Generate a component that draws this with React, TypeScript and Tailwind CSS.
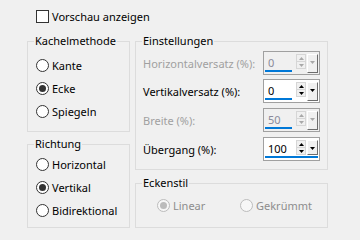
import React from "react";

const F = "font-['Noto_Sans',sans-serif]";

function Radio({ checked, disabled, label }: { checked?: boolean; disabled?: boolean; label: string }) {
  return (
    <div className="flex items-center h-[13px]">
      <span
        className={`w-[13px] h-[13px] rounded-full border flex items-center justify-center shrink-0 ${
          disabled ? "border-[#bcbcbc] bg-[#f7f7f7]" : "border-[#333333] bg-white"
        }`}
      >
        {checked && (
          <span className={`w-[7px] h-[7px] rounded-full ${disabled ? "bg-[#bcbcbc]" : "bg-[#333333]"}`} />
        )}
      </span>
      <span className={`ml-[3px] leading-[15px] whitespace-nowrap ${disabled ? "text-[#8d8d8d]" : "text-black"}`}>
        {label}
      </span>
    </div>
  );
}

function Group({ title, className, children }: { title: string; className: string; children: React.ReactNode }) {
  return (
    <div className={`relative border border-[#dcdcdc] ${className}`}>
      <span className="absolute left-[6px] top-[-9px] px-[1px] bg-[#f0f0f0] leading-[15px] whitespace-nowrap">
        {title}
      </span>
      {children}
    </div>
  );
}

function Tri({ up, color }: { up?: boolean; color: string }) {
  return (
    <svg width="5" height="3" viewBox="0 0 5 3">
      <path d={up ? "M2.5 0 L5 3 L0 3 Z" : "M0 0 L5 0 L2.5 3 Z"} fill={color} />
    </svg>
  );
}

function Arrows({ disabled }: { disabled?: boolean }) {
  const c = disabled ? "#a8a8a8" : "#000000";
  return (
    <div className="w-[10px] h-[15px] mt-[2px] flex flex-col border border-[#d6d6d6] bg-[#f0f0f0]">
      <div className="flex-1 flex items-center justify-center border-b border-[#d6d6d6]">
        <Tri up color={c} />
      </div>
      <div className="flex-1 flex items-center justify-center">
        <Tri color={c} />
      </div>
    </div>
  );
}

function DropBtn({ disabled, h }: { disabled?: boolean; h: string }) {
  const c = disabled ? "#a8a8a8" : "#000000";
  return (
    <div
      className={`w-[11px] ${h} mt-[2px] bg-[#f0f0f0] border-l border-t border-l-[#ffffff] border-t-[#ffffff] border-r border-b border-r-[#6d6d6d] border-b-[#6d6d6d] flex justify-center pt-[6px]`}
    >
      <Tri color={c} />
    </div>
  );
}

function Spinner({ value, disabled, focused }: { value: string; disabled?: boolean; focused?: boolean }) {
  const textCls = disabled ? "text-[#8a8a9a]" : "text-black";
  const bg = disabled ? "bg-[#f0f0f0]" : "bg-white";
  if (focused) {
    return (
      <div className={`w-[57px] h-[24px] border border-[#a0a0a0] ${bg} flex flex-col`}>
        <div className="flex flex-1">
          <div className={`ml-[1px] w-[27px] pl-[3px] pt-[3px] leading-[15px] ${textCls}`}>{value}</div>
          <div className="ml-[4px]">
            <Arrows disabled={disabled} />
          </div>
          <div className="ml-[1px]">
            <DropBtn disabled={disabled} h="h-[15px]" />
          </div>
        </div>
        <div className="mx-[1px] h-[3px] mb-[2px] bg-[#0078d7]" />
      </div>
    );
  }
  return (
    <div className={`w-[57px] h-[24px] border border-[#a0a0a0] ${bg} flex`}>
      <div className="ml-[1px] w-[27px] flex flex-col">
        <div className={`flex-1 pl-[3px] pt-[3px] leading-[15px] ${textCls}`}>{value}</div>
        <div className="h-[3px] mb-[2px] bg-[#0078d7]" />
      </div>
      <div className="ml-[4px]">
        <Arrows disabled={disabled} />
      </div>
      <div className="ml-[1px]">
        <DropBtn disabled={disabled} h="h-[19px]" />
      </div>
    </div>
  );
}

function Row({ label, disabled, children, className }: { label: string; disabled?: boolean; children: React.ReactNode; className: string }) {
  return (
    <div className={`flex items-center justify-between h-[24px] ${className}`}>
      <span className={`leading-[15px] whitespace-nowrap ${disabled ? "text-[#a0a0a0]" : "text-black"}`}>{label}</span>
      {children}
    </div>
  );
}

export default function App() {
  return (
    <div className={`w-[360px] h-[240px] bg-[#f0f0f0] ${F} text-[11px] text-black overflow-hidden`}>
      <div className="pt-[9px] pl-[36px] flex items-center">
        <span className="w-[13px] h-[13px] border border-[#333333] bg-white shrink-0" />
        <span className="ml-[3px] leading-[15px]">Vorschau anzeigen</span>
      </div>
      <div className="flex pl-[27px] mt-[17px] gap-[5px]">
        <div className="w-[103px] flex flex-col">
          <Group title="Kachelmethode" className="h-[91px] pt-[17px] pl-[8px]">
            <div className="flex flex-col gap-[10px]">
              <Radio label="Kante" />
              <Radio label="Ecke" checked />
              <Radio label="Spiegeln" />
            </div>
          </Group>
          <Group title="Richtung" className="h-[84px] mt-[12px] pt-[13px] pl-[8px]">
            <div className="flex flex-col gap-[10px]">
              <Radio label="Horizontal" />
              <Radio label="Vertikal" checked />
              <Radio label="Bidirektional" />
            </div>
          </Group>
        </div>
        <div className="w-[193px] flex flex-col">
          <Group title="Einstellungen" className="h-[129px] pt-[9px] pl-[7px] pr-[7px]">
            <Row label="Horizontalversatz (%):" disabled className="">
              <Spinner value="0" disabled />
            </Row>
            <Row label="Vertikalversatz (%):" className="mt-[4px]">
              <Spinner value="0" />
            </Row>
            <Row label="Breite (%):" disabled className="mt-[5px]">
              <Spinner value="50" disabled />
            </Row>
            <Row label="Übergang (%):" className="mt-[5px]">
              <Spinner value="100" focused />
            </Row>
          </Group>
          <Group title="Eckenstil" className="h-[45px] mt-[13px] pt-[15px] pl-[21px]">
            <div className="flex">
              <div className="w-[83px]">
                <Radio label="Linear" checked disabled />
              </div>
              <Radio label="Gekrümmt" disabled />
            </div>
          </Group>
        </div>
      </div>
    </div>
  );
}
